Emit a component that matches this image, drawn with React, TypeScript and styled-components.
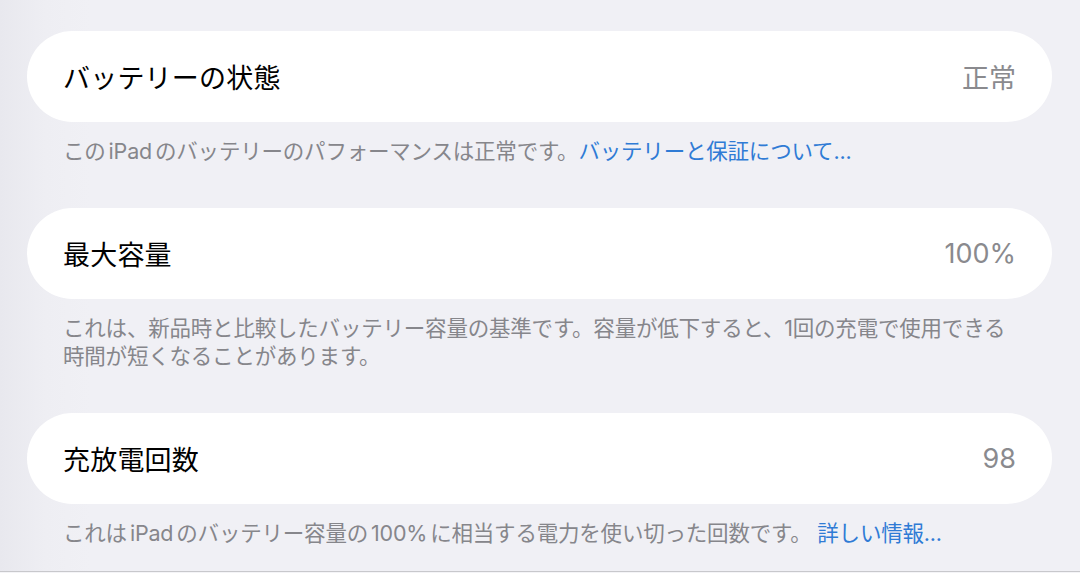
import React from "react";
import styled, { createGlobalStyle } from "styled-components";

const GlobalStyle = createGlobalStyle`
    * {
        box-sizing: border-box;
    }
    html, body {
        margin: 0;
        padding: 0;
        background: #f0f0f5;
        font-family: "Inter", "Noto Sans CJK JP", "Noto Sans", sans-serif;
        -webkit-font-smoothing: antialiased;
    }
`;

const Page = styled.div`
    width: 1080px;
    height: 573px;
    display: flex;
    flex-direction: column;
    padding: 31px 28px 0 27px;
    background: linear-gradient(to right, #e8e8ee 0, #eeeef3 45px, #f0f0f5 90px, #f0f0f5 100%);
    overflow: hidden;
`;

const Section = styled.section`
    display: flex;
    flex-direction: column;
    & + & {
        margin-top: 43px;
    }
`;

const Card = styled.div`
    height: 91px;
    border-radius: 46px;
    background: #ffffff;
    display: flex;
    align-items: center;
    justify-content: space-between;
    padding: 0 36px;
`;

const Title = styled.span`
    font-size: 27px;
    color: #000000;
    letter-spacing: 0.2px;
`;

const Value = styled.span`
    font-size: 27px;
    color: #8a8a8e;
`;

const Footnote = styled.p`
    margin: 15px 0 0;
    padding: 0 36px;
    font-size: 21.5px;
    line-height: 28px;
    letter-spacing: -0.2px;
    color: #86868b;
`;

const Latin = styled.span`
    padding: 0 3px;
`;

const Link = styled.a`
    color: #2f7bd5;
    text-decoration: none;
`;

const BottomBar = styled.div`
    margin: auto -28px 0 -27px;
    height: 2px;
    border-top: 1px solid #c8c8cc;
    background: #f4f4f7;
`;

export default function App() {
    return (
        <>
            <GlobalStyle />
            <Page>
                <Section>
                    <Card>
                        <Title>バッテリーの状態</Title>
                        <Value>正常</Value>
                    </Card>
                    <Footnote>
                        この<Latin>iPad</Latin>のバッテリーのパフォーマンスは正常です。<Link href="#">バッテリーと保証について...</Link>
                    </Footnote>
                </Section>
                <Section>
                    <Card>
                        <Title>最大容量</Title>
                        <Value>100%</Value>
                    </Card>
                    <Footnote>
                        これは、新品時と比較したバッテリー容量の基準です。容量が低下すると、1回の充電で使用できる時間が短くなることがあります。
                    </Footnote>
                </Section>
                <Section>
                    <Card>
                        <Title>充放電回数</Title>
                        <Value>98</Value>
                    </Card>
                    <Footnote>
                        これは<Latin>iPad</Latin>のバッテリー容量の<Latin>100%</Latin>に相当する電力を使い切った回数です。 <Link href="#">詳しい情報...</Link>
                    </Footnote>
                </Section>
                <BottomBar />
            </Page>
        </>
    );
}
